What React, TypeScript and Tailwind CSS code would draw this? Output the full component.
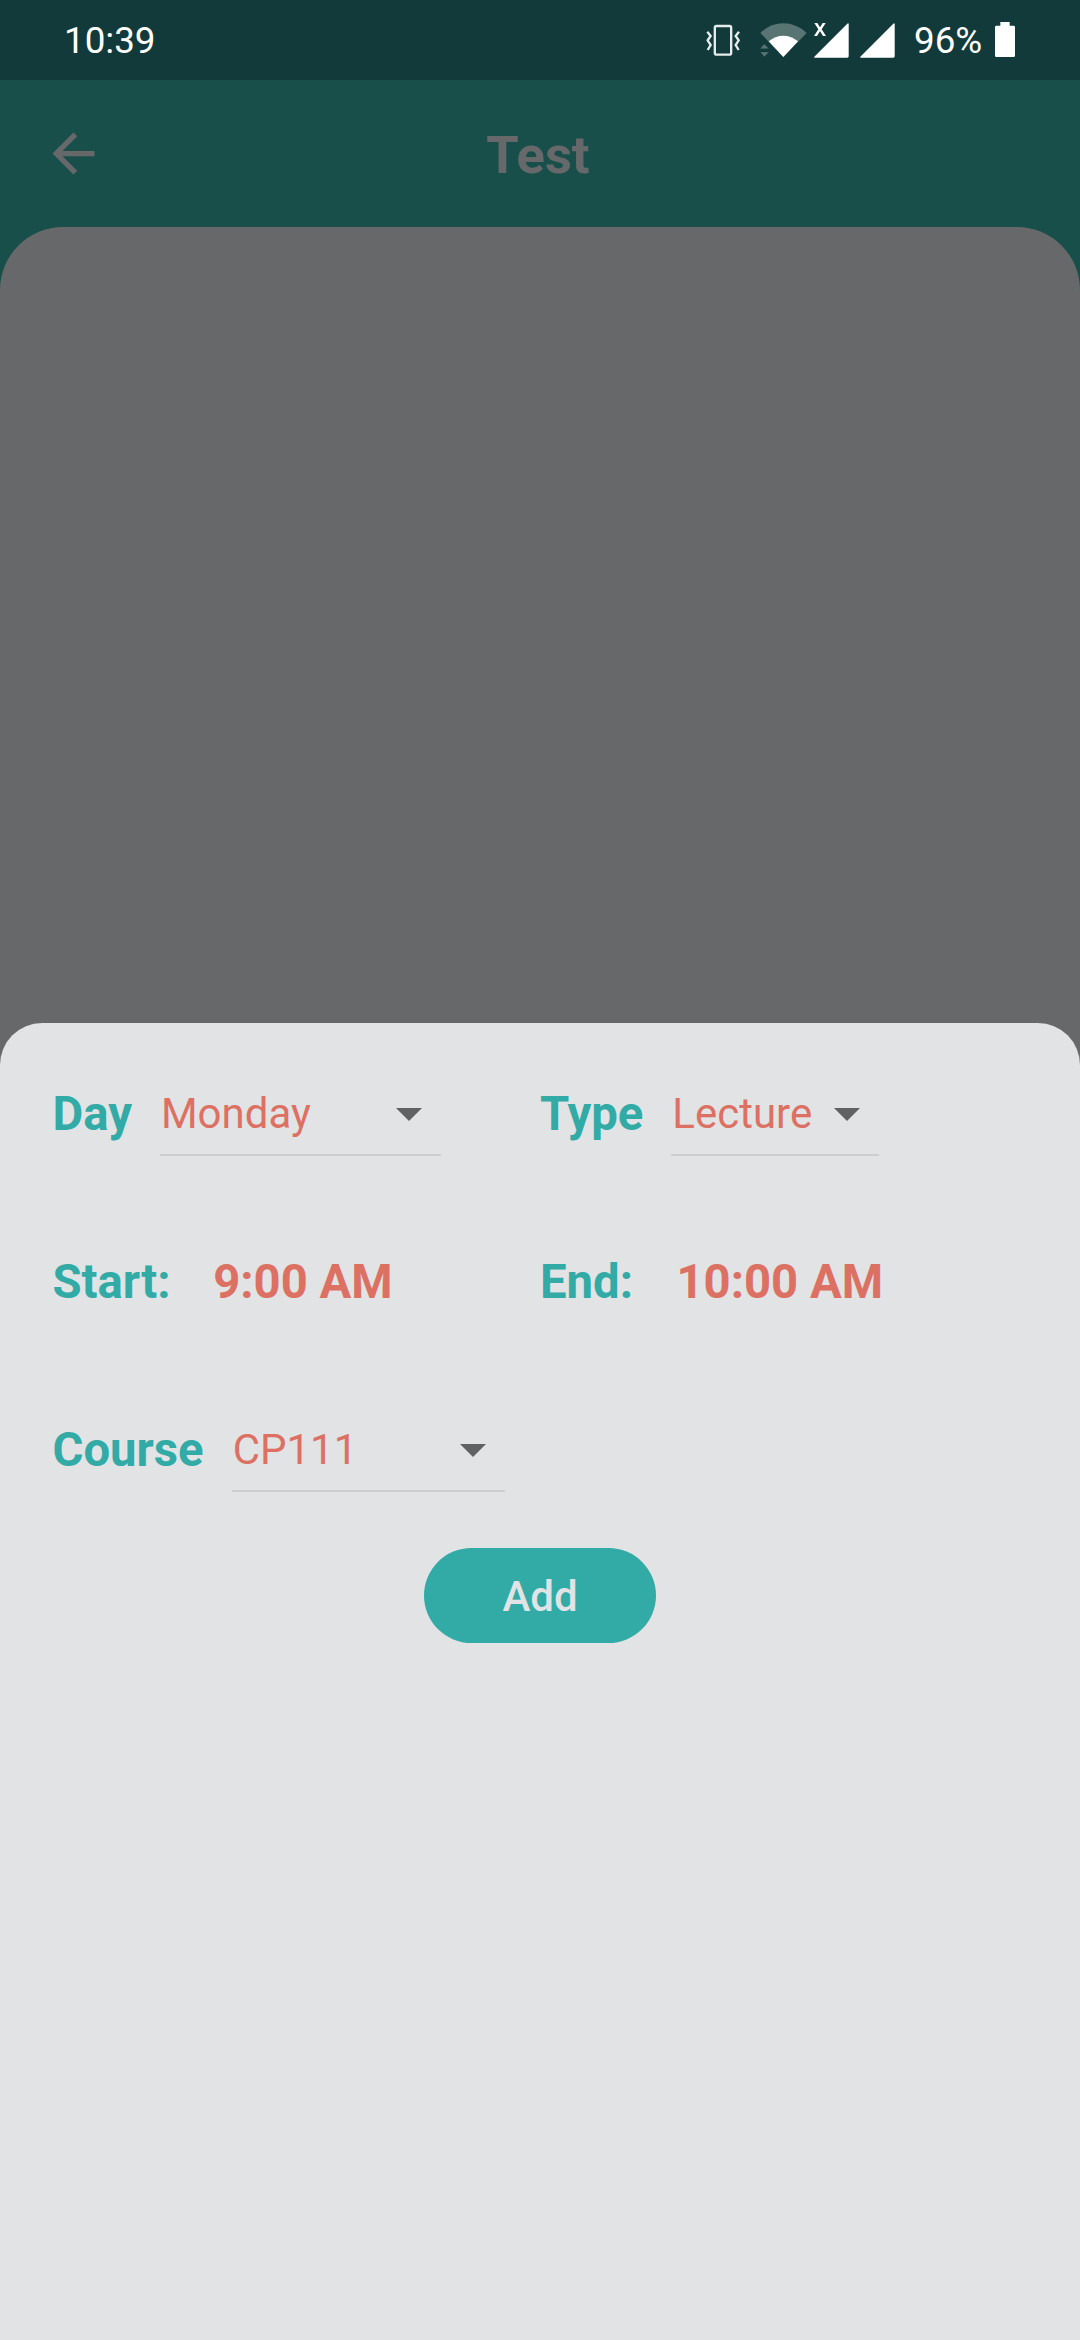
import type { ReactNode } from "react";

function VibrateIcon() {
  return (
    <svg className="h-[34px] w-[36px]" viewBox="0 0 108 102" fill="none" stroke="#e6ecec">
      <rect x="29.5" y="9" width="49" height="86" rx="5" strokeWidth="7" />
      <path d="M7 26l10 13-9 13 9 14-9 15M102 26l-10 13 9 13-9 14 9 15" strokeWidth="7" />
    </svg>
  );
}

function WifiIcon() {
  return (
    <svg className="h-[34px] w-[47px]" viewBox="0 0 141 102">
      <path d="M1 30Q31 1 70 1t70 29L70 102z" fill="#587473" />
      <path d="M26 55Q46 38 70 38t44 17L70 102z" fill="#fff" />
      <path d="M0 77l13-14 14 14zM0 87h27l-14 14z" fill="#587473" stroke="#123a3a" strokeWidth="1" />
    </svg>
  );
}

function SignalIcon() {
  return (
    <svg className="h-[35px] w-[35px]" viewBox="0 0 105 105" fill="#fff">
      <path d="M1 101L100 2q4-3 4 2v96q0 4-4 4H3q-4 0-2-3z" />
    </svg>
  );
}

function BatteryIcon() {
  return (
    <svg className="h-[35px] w-[20px]" viewBox="0 0 60 105" fill="#fff">
      <path d="M16 0h28v11h12q4 0 4 4v86q0 4-4 4H4q-4 0-4-4V15q0-4 4-4h12z" />
    </svg>
  );
}

function StatusBar() {
  return (
    <div className="flex h-20 items-center justify-between bg-[#123a3a] pr-[65px] pl-16 text-[36.75px] leading-none text-white">
      <span className="pt-[2px]">10:39</span>
      <div className="flex items-center">
        <VibrateIcon />
        <div className="ml-[19px] flex">
          <WifiIcon />
        </div>
        <div className="relative ml-[7px]">
          <SignalIcon />
          <svg className="absolute top-0 left-0 h-[13px] w-[12px]" viewBox="0 0 36 39" fill="#fff">
            <path d="M1 0h9l8 13 8-13h9L23 19l13 20h-9l-9-14-9 14H0l13-20z" />
          </svg>
        </div>
        <div className="ml-[11px]">
          <SignalIcon />
        </div>
        <span className="ml-[19px] w-[69px] pt-[2px] whitespace-nowrap">96%</span>
        <div className="ml-[12px] pb-[1px]">
          <BatteryIcon />
        </div>
      </div>
    </div>
  );
}

function Header() {
  return (
    <header className="grid h-[147px] grid-cols-3 items-center bg-[#184f4b] px-[42px] text-[#67686a]">
      <svg className="h-[63px] w-[63px]" viewBox="0 0 24 24" fill="currentColor">
        <path d="M20 11H7.83l5.59-5.59L12 4l-8 8 8 8 1.41-1.41L7.83 13H20z" />
      </svg>
      <h1 className="pt-1 pr-1 text-center text-[52.5px] leading-none font-bold">Test</h1>
    </header>
  );
}

function Label({ children }: { children: ReactNode }) {
  return <span className="pt-1 text-[47.25px] leading-none font-bold text-[#32aba7]">{children}</span>;
}

function Select({ value, width }: { value: string; width: string }) {
  return (
    <div className={`flex h-[86px] items-center justify-between border-b-2 border-[#cbcdce] pr-[19px] pl-px ${width}`}>
      <span className="pt-[3px] text-[42px] leading-none text-[#dc7163]">{value}</span>
      <svg className="mt-1 h-[13px] w-[26px]" viewBox="0 0 26 13" fill="#616161">
        <path d="M0 0h26L13 13z" />
      </svg>
    </div>
  );
}

function Time({ children }: { children: ReactNode }) {
  return <span className="pt-1 text-[47.25px] leading-none font-bold text-[#dc7163]">{children}</span>;
}

export default function App() {
  return (
    <div className="flex h-[2340px] w-[1080px] flex-col overflow-hidden bg-[#184f4b] font-['Roboto',sans-serif]">
      <StatusBar />
      <Header />
      <main className="flex flex-1 flex-col rounded-t-[63px] bg-[#67686a] pt-[796px]">
        <section className="flex flex-1 flex-col rounded-t-[42px] bg-[#e1e3e5] pt-[6px]">
          <div className="grid grid-cols-2 grid-rows-[repeat(3,168px)]">
            <div className="flex items-center gap-7 pl-[52.5px]">
              <Label>Day</Label>
              <Select value="Monday" width="w-[281px]" />
            </div>
            <div className="flex items-center gap-7">
              <Label>Type</Label>
              <Select value="Lecture" width="w-[208px]" />
            </div>
            <div className="flex items-center gap-[42.5px] pl-[52.5px]">
              <Label>Start:</Label>
              <Time>9:00 AM</Time>
            </div>
            <div className="flex items-center gap-[43.5px]">
              <Label>End:</Label>
              <Time>10:00 AM</Time>
            </div>
            <div className="flex items-center gap-7 pl-[52.5px]">
              <Label>Course</Label>
              <Select value="CP111" width="w-[273px]" />
            </div>
          </div>
          <button className="mt-[15px] h-[95px] w-[232px] self-center rounded-full bg-[#32aba7] pt-[2px] text-[42px] leading-none font-medium text-[#e1e3e5]">
            Add
          </button>
        </section>
      </main>
    </div>
  );
}
